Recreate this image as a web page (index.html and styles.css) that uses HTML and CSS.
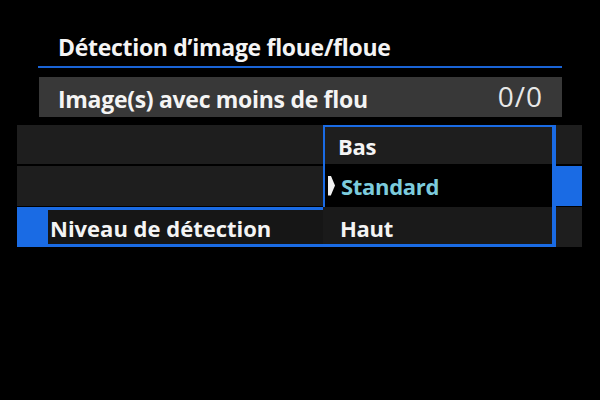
FILE: index.html
```html
<!DOCTYPE html>
<html lang="fr">
<head>
<meta charset="utf-8">
<link rel="stylesheet" href="styles.css">
</head>
<body>
<div class="screen">
  <div class="head">
    <div class="title">Détection d’image floue/floue</div>
    <div class="rule"></div>
    <div class="info">
      <span class="info-label">Image(s) avec moins de flou</span>
      <span class="info-value">0/0</span>
    </div>
  </div>
  <div class="list">
    <div class="row"></div>
    <div class="row row-mid"><div class="side-mark"></div></div>
    <div class="row row-sel">
      <div class="sel">
        <div class="sel-label">Niveau de détection</div>
      </div>
    </div>
    <div class="menu">
      <div class="opt opt-bas">Bas</div>
      <div class="opt opt-std"><span class="pointer"></span>Standard</div>
      <div class="opt opt-haut">Haut</div>
    </div>
  </div>
</div>
</body>
</html>
```

FILE: styles.css
```css
html, body {
  margin: 0;
  padding: 0;
  background: #000;
}
body {
  width: 600px;
  height: 400px;
  overflow: hidden;
  font-family: "Open Sans", "Liberation Sans", sans-serif;
  font-weight: 700;
  color: #f4f4f4;
}
.screen {
  display: flex;
  flex-direction: column;
}
.head {
  margin-left: 38px;
  width: 524px;
  display: flex;
  flex-direction: column;
}
.title {
  height: 66px;
  box-sizing: border-box;
  padding: 32px 0 0 20px;
  font-size: 23px;
  line-height: 30px;
  letter-spacing: -0.3px;
}
.rule {
  height: 2px;
  background: #1a64d6;
}
.info {
  margin-top: 9px;
  margin-left: 1px;
  height: 40px;
  background: #383838;
  display: flex;
  align-items: center;
  justify-content: space-between;
  padding: 0 19px;
}
.info-label {
  font-size: 23px;
  letter-spacing: -0.3px;
  padding-top: 4px;
}
.info-value {
  font-weight: 400;
  font-size: 28px;
  color: #e8e8e8;
  letter-spacing: 1px;
  padding-bottom: 2px;
}
.list {
  position: relative;
  margin-top: 8px;
  margin-left: 17px;
  width: 565px;
  display: flex;
  flex-direction: column;
}
.row {
  height: 39px;
  background: #1e1e1e;
  display: flex;
}
.row-mid {
  margin-top: 2px;
  height: 40px;
  justify-content: flex-end;
}
.side-mark {
  width: 26px;
  background: #1a6be4;
}
.row-sel {
  margin-top: 1px;
  height: 40px;
}
.sel {
  width: 539px;
  box-sizing: border-box;
  background: #1a6be4;
  padding: 3px 0 3px 31px;
  display: flex;
}
.sel-label {
  flex: 1;
  background: #161616;
  padding-left: 2px;
  padding-top: 3px;
  box-sizing: border-box;
  font-size: 22px;
  line-height: 31px;
  letter-spacing: 0;
}
.menu {
  position: absolute;
  left: 306px;
  top: 0;
  width: 233px;
  height: 122px;
  box-sizing: border-box;
  border-top: 2px solid #1a6be4;
  border-right: 4px solid #1a6be4;
  border-bottom: 3px solid #1a6be4;
  display: flex;
  flex-direction: column;
}
.opt {
  font-size: 22px;
  letter-spacing: -0.3px;
  display: flex;
  align-items: center;
  box-sizing: border-box;
}
.opt-bas {
  height: 37px;
  background: #1e1e1e;
  border-left: 2px solid #1a6be4;
  padding-left: 13px;
}
.opt-std {
  height: 43px;
  background: #000;
  border-left: 2px solid #1a6be4;
  padding-left: 3px;
  color: #7ccbdc;
}
.pointer {
  width: 7px;
  height: 20px;
  margin-right: 6px;
  background: #f2f2f2;
  clip-path: polygon(0 0, 40% 0, 100% 50%, 40% 100%, 0 100%);
}
.opt-haut {
  height: 37px;
  background: #1a1a1a;
  padding-left: 17px;
  padding-top: 5px;
}
```
